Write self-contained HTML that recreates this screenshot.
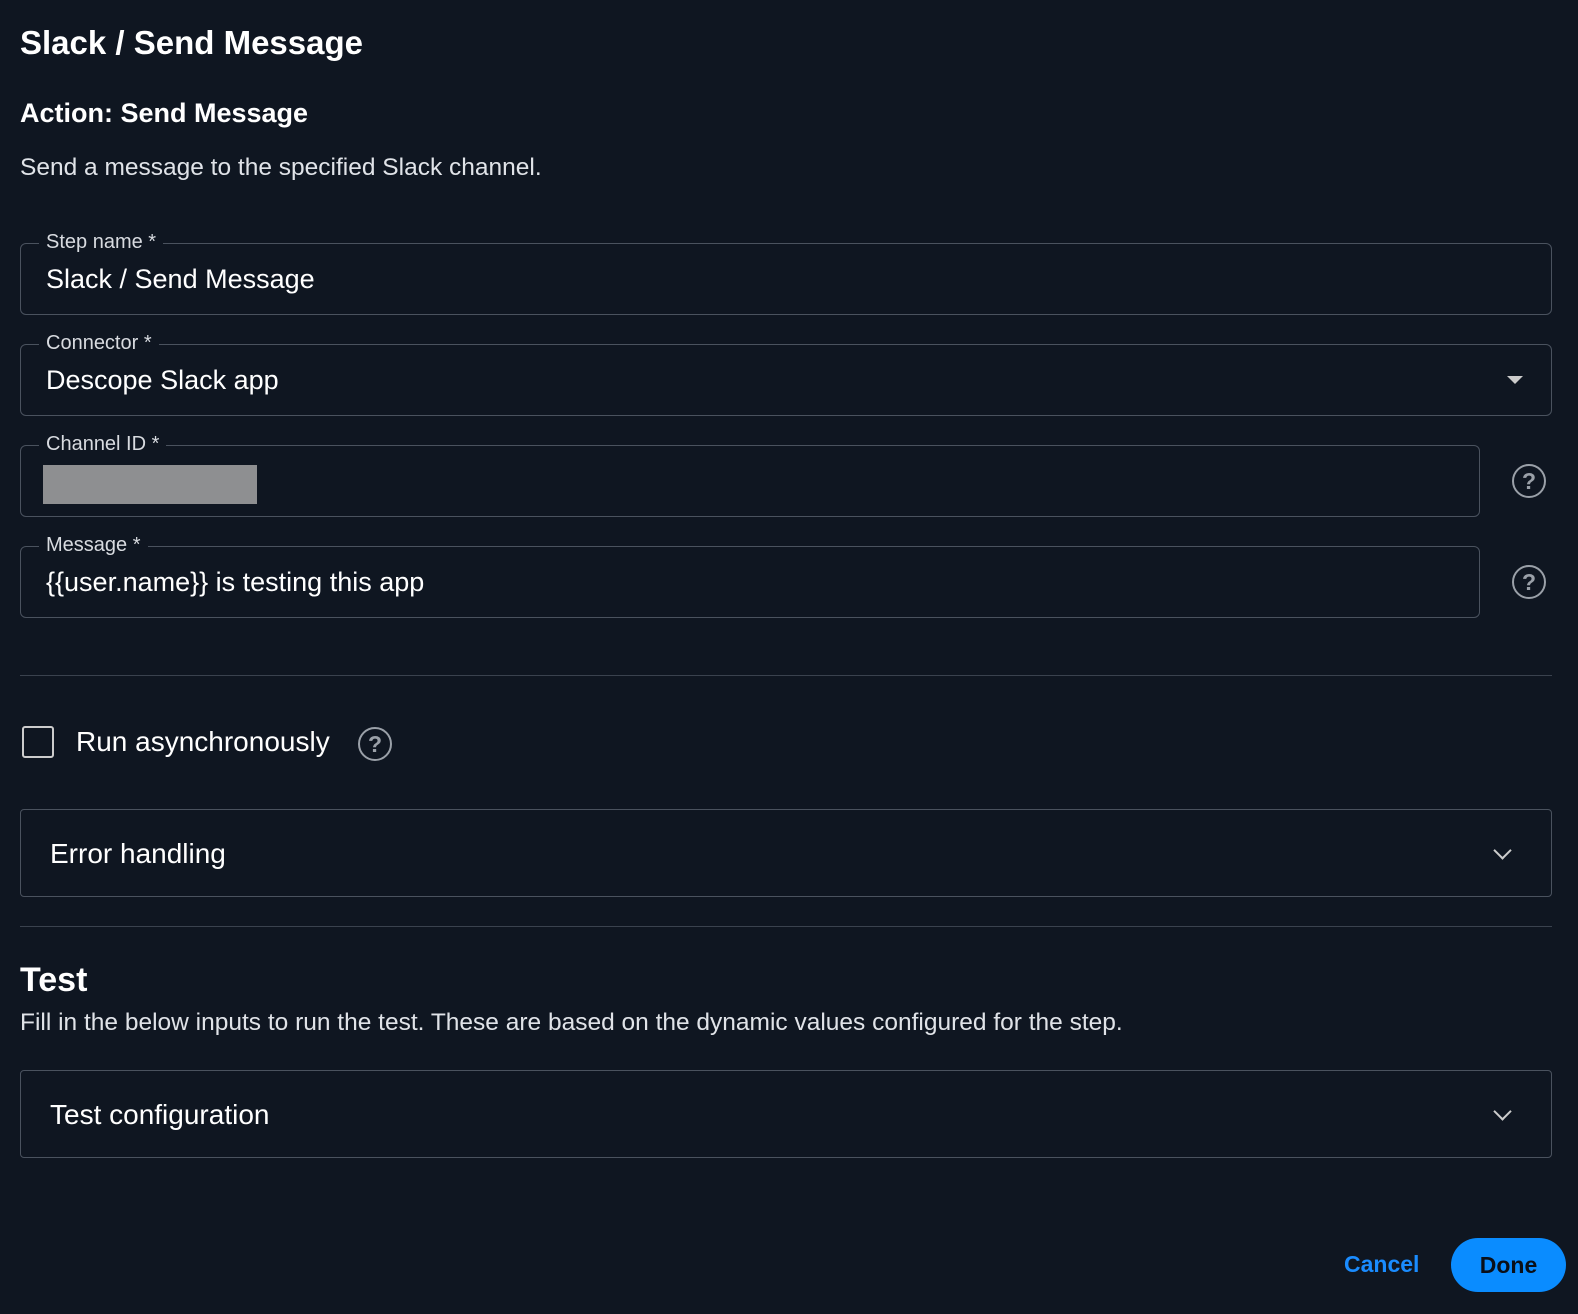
<!DOCTYPE html>
<html><head><style>
body{margin:0;width:1578px;height:1314px;background:#0f1621;font-family:"Liberation Sans",sans-serif;color:#fff;position:relative;overflow:hidden}
.a{position:absolute}
.f{position:absolute;left:20px;border:1px solid #4a525e;border-radius:6px;height:70px}
.lab{position:absolute;top:-13px;left:18px;background:#0f1621;padding:0 7px;font-size:20px;color:#d8dbe0}
.val{position:absolute;left:25px;top:20px;font-size:27px;color:#fff}
.q{position:absolute;width:30px;height:30px;border:2.5px solid #9aa0a8;border-radius:50%;color:#9aa0a8;font-size:23px;font-weight:bold;text-align:center;line-height:31px}
.hr{position:absolute;left:20px;width:1532px;height:1px;background:#3a424e}
.acc{position:absolute;left:20px;width:1530px;border:1px solid #4a525e;border-radius:4px;height:86px}
.acc span{position:absolute;left:29px;top:28px;font-size:28px}
.chev{position:absolute;right:42px;top:34px;width:11px;height:11px;border-right:2.5px solid #ccc;border-bottom:2.5px solid #ccc;transform:rotate(45deg)}
</style></head><body>
<div class="a" style="left:20px;top:24px;font-size:33px;font-weight:bold">Slack / Send Message</div>
<div class="a" style="left:20px;top:98px;font-size:27px;font-weight:bold">Action: Send Message</div>
<div class="a" style="left:20px;top:154px;font-size:24.5px;color:#e0e3e8">Send a message to the specified Slack channel.</div>

<div class="f" style="top:243px;width:1530px"><div class="lab">Step name *</div><div class="val">Slack / Send Message</div></div>
<div class="f" style="top:344px;width:1530px"><div class="lab">Connector *</div><div class="val">Descope Slack app</div>
<div class="a" style="right:28px;top:31px;width:0;height:0;border-left:8px solid transparent;border-right:8px solid transparent;border-top:8px solid #ccc"></div></div>
<div class="f" style="top:445px;width:1458px"><div class="lab">Channel ID *</div><div class="a" style="left:22px;top:19px;width:214px;height:39px;background:#8e8f91"></div></div>
<div class="q" style="left:1512px;top:464px">?</div>
<div class="f" style="top:546px;width:1458px"><div class="lab">Message *</div><div class="val">{{user.name}} is testing this app</div></div>
<div class="q" style="left:1512px;top:565px">?</div>

<div class="hr" style="top:675px"></div>
<div class="a" style="left:22px;top:726px;width:28px;height:28px;border:2.5px solid #ccc;border-radius:3px"></div>
<div class="a" style="left:76px;top:726px;font-size:28px">Run asynchronously</div>
<div class="q" style="left:358px;top:727px">?</div>

<div class="acc" style="top:809px"><span>Error handling</span><div class="chev"></div></div>
<div class="hr" style="top:926px"></div>
<div class="a" style="left:20px;top:961px;font-size:34px;font-weight:bold">Test</div>
<div class="a" style="left:20px;top:1009px;font-size:24.5px;color:#e0e3e8">Fill in the below inputs to run the test. These are based on the dynamic values configured for the step.</div>
<div class="acc" style="top:1070px"><span>Test configuration</span><div class="chev"></div></div>

<div class="a" style="left:1344px;top:1251px;font-size:23px;font-weight:bold;color:#1a8cff">Cancel</div>
<div class="a" style="left:1451px;top:1238px;width:115px;height:54px;border-radius:27px;background:#0a8cff;color:#0a0f18;font-size:23px;font-weight:bold;text-align:center;line-height:54px">Done</div>
</body></html>
